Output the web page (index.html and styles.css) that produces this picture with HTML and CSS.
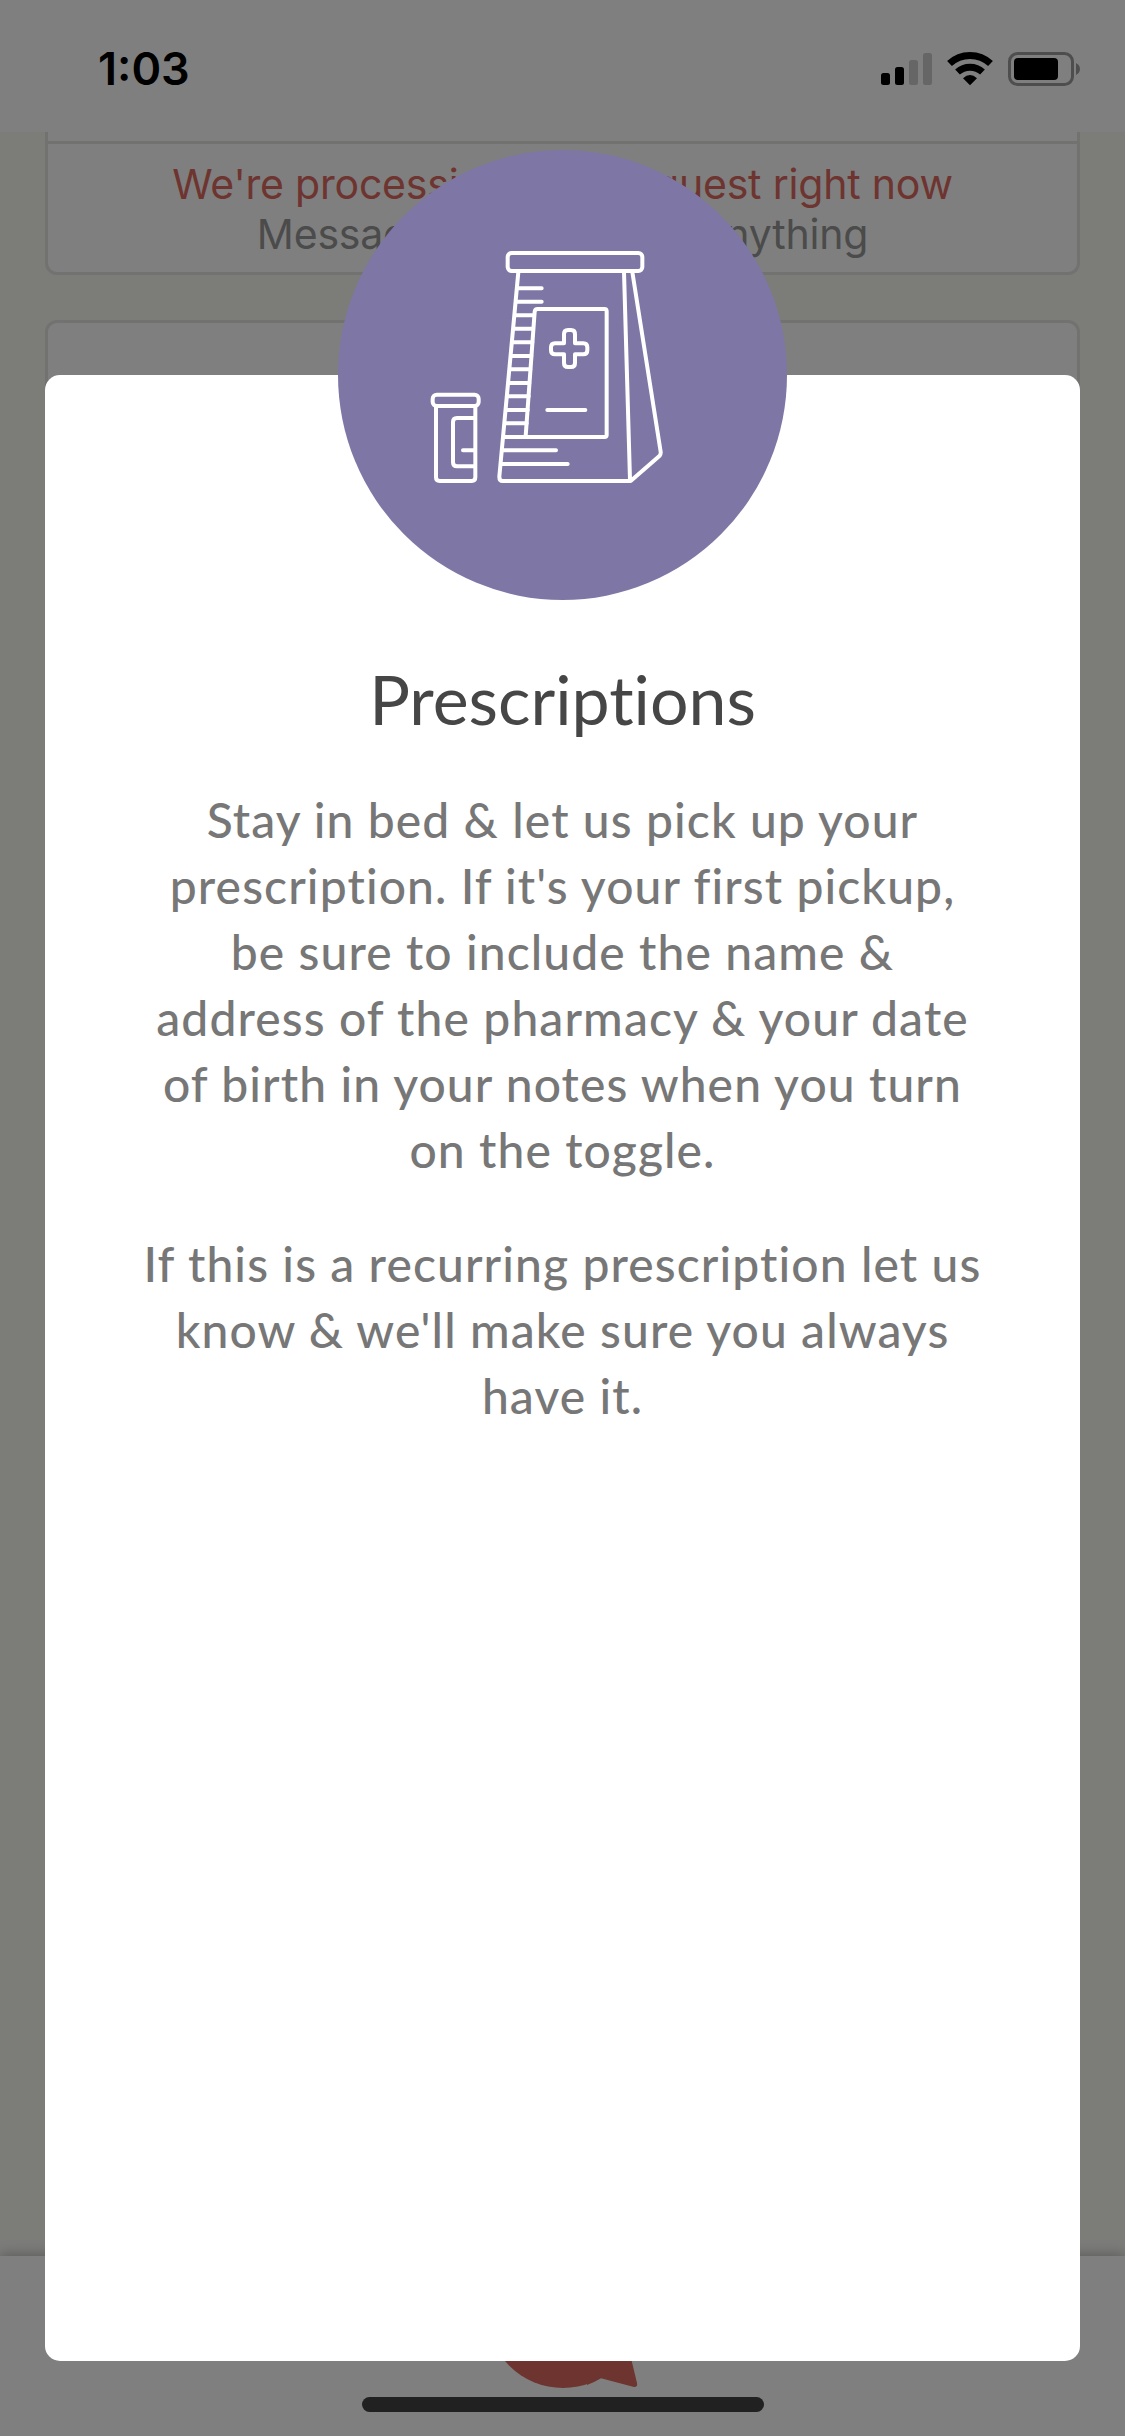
FILE: index.html
```html
<!DOCTYPE html>
<html lang="en">
<head>
    <meta charset="UTF-8">
    <meta name="viewport" content="width=device-width, initial-scale=1.0">
    <title>Prescriptions</title>
    <link rel="stylesheet" href="styles.css">
</head>
<body>
    <div class="app">
        <header class="status-bar">
            <span class="time">1:03</span>
            <svg class="status-icons" width="202" height="36" viewBox="0 0 202 36">
                <rect x="1" y="22" width="9" height="12" rx="2.5"/>
                <rect x="15" y="16" width="9" height="18" rx="2.5"/>
                <rect class="faded" x="29" y="9" width="9" height="25" rx="2.5"/>
                <rect class="faded" x="43" y="2" width="9" height="32" rx="2.5"/>
                <path class="wifi" d="M69.5 12.5 A30 30 0 0 1 110.5 12.5"/>
                <path class="wifi" d="M77.5 21 A18.5 18.5 0 0 1 102.5 21"/>
                <path d="M83 27.3 Q90 20.5 97 27.3 L90 34.2 Z"/>
                <rect class="battery" x="129.5" y="2.5" width="63" height="31" rx="8"/>
                <rect x="134" y="7" width="44" height="22" rx="4"/>
                <path class="battery-cap" d="M196 12 C201.3 14.5 201.3 21.5 196 24 Z"/>
            </svg>
        </header>

        <main class="feed">
            <section class="card card-request">
                <div class="card-message">
                    <p class="processing">We're processing your request right now</p>
                    <p>Message us to change anything</p>
                </div>
            </section>
            <section class="card card-next"></section>
        </main>

        <nav class="tab-bar">
            <svg class="chat-icon" width="152" height="152" viewBox="0 0 152 152">
                <circle cx="76" cy="76" r="76"/>
                <path d="M114 142.3 L147 151 Q151 151 150 147 L143 118 L100 100 L100 149 Q108 146 114 142.3 Z"/>
            </svg>
            <div class="home-indicator"></div>
        </nav>
    </div>

    <div class="overlay">
        <div class="modal">
            <div class="badge">
                <svg class="rx-icon" width="449" height="450" viewBox="-186 -210 1347 1350">
                    <!-- bag -->
                    <rect x="323" y="99" width="404" height="54" rx="12"/>
                    <path d="M355 156 L298 770 Q298 783 308 783 H692 L779 707 Q783 702 782 695 L697 156 M672 156 L690 780"/>
                    <!-- bag side lines -->
                    <path d="M354 205 H425 M351 245 H425 M347 286 H402 M343 326 H399 M339 367 H397 M336 408 H394 M332 448 H391 M328 489 H388 M324 529 H386 M321 570 H383 M317 610 H380 M309 691 H468 M305 732 H503"/>
                    <!-- label -->
                    <path d="M377 648 L404 275 Q405 267 413 267 H613 Q620 267 620 274 V645 Q620 651 613 651 H313"/>
                    <path d="M492 342 Q492 330 504 330 H513 Q525 330 525 342 V370 H550 Q562 370 562 382 V391 Q562 403 550 403 H525 V429 Q525 441 513 441 H504 Q492 441 492 429 V403 H465 Q453 403 453 391 V382 Q453 370 465 370 H492 Z M442 570 H556"/>
                    <!-- bottle -->
                    <rect x="98" y="524" width="138" height="34" rx="12"/>
                    <path d="M108 560 V772 Q108 783 119 783 H215 Q226 783 226 772 V560 M224 594 H171 Q159 594 159 606 V727 Q159 739 171 739 H224 M189 691 H224"/>
                </svg>
            </div>
            <h1 class="title">Prescriptions</h1>
            <div class="description">
                <p>Stay in bed &amp; let us pick up your<br>
                prescription. If it's your first pickup,<br>
                be sure to include the name &amp;<br>
                address of the pharmacy &amp; your date<br>
                of birth in your notes when you turn<br>
                on the toggle.</p>
                <p>If this is a recurring prescription let us<br>
                know &amp; we'll make sure you always<br>
                have it.</p>
            </div>
        </div>
    </div>
</body>
</html>
```
FILE: styles.css
```css
/* General Styles */
* {
    box-sizing: border-box;
}

body {
    position: relative;
    margin: 0;
    width: 1125px;
    height: 2436px;
    overflow: hidden;
    font-family: Inter, 'Liberation Sans', sans-serif;
}

p,
h1 {
    margin: 0;
}

svg {
    display: block;
}

.app {
    display: flex;
    flex-direction: column;
    height: 2436px;
    background-color: #f8f8f3;
}

/* Status Bar */
.status-bar {
    display: flex;
    justify-content: space-between;
    height: 132px;
    padding: 51px 43px 0 98px;
    background-color: #fff;
}

.time {
    font-size: 45px;
    font-weight: 600;
    line-height: 36px;
    color: #000;
}

.status-icons .faded {
    fill: #ccc;
}

.status-icons .wifi {
    fill: none;
    stroke: #000;
    stroke-width: 7;
}

.status-icons .battery {
    fill: none;
    stroke: #9c9c9c;
    stroke-width: 3;
}

.status-icons .battery-cap {
    fill: #9c9c9c;
}

/* Cards */
.feed {
    flex: 1;
    display: flex;
    flex-direction: column;
    gap: 45px;
    padding: 0 45px;
}

.card {
    background-color: #fff;
    border: 3px solid #e4e4e2;
    border-radius: 12px;
}

.card-request {
    height: 143px;
    padding-top: 9px;
    border-top: none;
    border-radius: 0 0 12px 12px;
}

.card-message {
    padding-top: 15px;
    border-top: 3px solid #e4e4e2;
    text-align: center;
    font-size: 41px;
    line-height: 50px;
    letter-spacing: -0.2px;
    color: #969696;
}

.card-message .processing {
    color: #dc685e;
}

.card-next {
    height: 600px;
}

/* Tab Bar */
.tab-bar {
    display: flex;
    flex-direction: column;
    align-items: center;
    height: 180px;
    background-color: #fff;
    box-shadow: 0 -2px 12px rgba(0, 0, 0, 0.25);
}

.chat-icon {
    margin-top: -20px;
    fill: #dc685e;
}

.home-indicator {
    width: 402px;
    height: 15px;
    margin-top: 9px;
    border-radius: 8px;
    background-color: #424242;
}

/* Modal */
.overlay {
    position: absolute;
    inset: 0;
    padding: 375px 45px 75px;
    background-color: rgba(0, 0, 0, 0.5);
}

.modal {
    display: flex;
    flex-direction: column;
    align-items: center;
    height: 1986px;
    border-radius: 15px;
    background-color: #fff;
}

.badge {
    flex-shrink: 0;
    width: 449px;
    height: 450px;
    margin-top: -225px;
    border-radius: 50%;
    background-color: #7e77a6;
}

.rx-icon {
    fill: none;
    stroke: #fff;
    stroke-width: 12;
    stroke-linecap: round;
    stroke-linejoin: round;
}

.title {
    margin-top: 54px;
    font-family: Lato, sans-serif;
    font-size: 68px;
    font-weight: 400;
    font-variant-ligatures: none;
    line-height: 90px;
    color: #464646;
}

.description {
    display: flex;
    flex-direction: column;
    gap: 48px;
    margin-top: 43px;
    font-family: Lato, sans-serif;
    font-size: 48px;
    font-weight: 500;
    line-height: 66px;
    letter-spacing: 1.1px;
    text-align: center;
    white-space: nowrap;
    color: #777;
}
```
